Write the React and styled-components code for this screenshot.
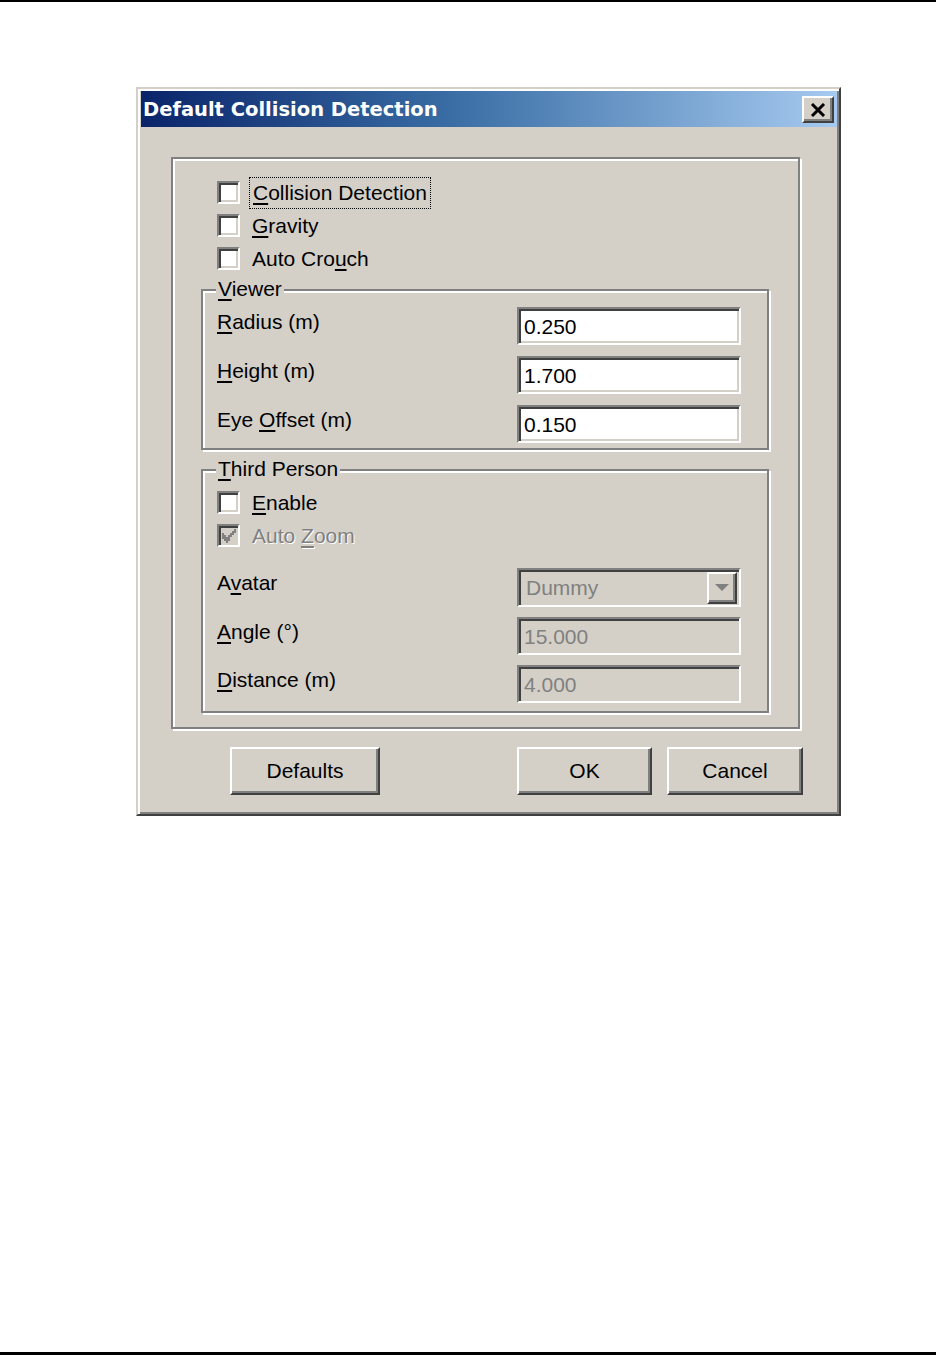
import React from "react";
import styled, { createGlobalStyle, css } from "styled-components";

const FACE = "#d4d0c8";
const SHADOW = "#808080";
const DARK = "#404040";
const LIGHT = "#ffffff";

const GlobalStyle = createGlobalStyle`
  html, body { margin: 0; padding: 0; background: #fff; }
  * { box-sizing: border-box; }
`;

const Page = styled.div`
  width: 936px;
  height: 1355px;
  border-top: 2px solid #000;
  border-bottom: 3px solid #000;
  padding: 85px 0 0 136px;
  background: #fff;
`;

const Dialog = styled.div`
  width: 705px;
  height: 729px;
  background: ${FACE};
  border: 2px solid;
  border-color: ${FACE} ${DARK} ${DARK} ${FACE};
  box-shadow: inset 2px 2px ${LIGHT}, inset -2px -2px ${SHADOW};
  padding: 2px 2px 0 3px;
  display: flex;
  flex-direction: column;
  font-family: "Liberation Sans", Arial, sans-serif;
  font-size: 21px;
  color: #000;
`;

const TitleBar = styled.div`
  height: 36px;
  display: flex;
  align-items: center;
  justify-content: space-between;
  padding: 1px 3px 0 2px;
  background: linear-gradient(to right, #0a246a 0%, #3a6ea5 45%, #a6caf0 100%);
`;

const Title = styled.span`
  font-family: "DejaVu Sans", Verdana, sans-serif;
  font-weight: bold;
  font-size: 19.5px;
  color: #fff;
  line-height: 1;
`;

const raised = css`
  background: ${FACE};
  border: 2px solid;
  border-color: ${LIGHT} ${DARK} ${DARK} ${LIGHT};
  box-shadow: inset -2px -2px ${SHADOW}, inset 2px 2px ${FACE};
`;

const sunken = css`
  border: 2px solid;
  border-color: ${SHADOW} ${LIGHT} ${LIGHT} ${SHADOW};
  box-shadow: inset 2px 2px ${DARK}, inset -2px -2px ${FACE};
`;

const CloseButton = styled.div`
  ${raised};
  width: 32px;
  height: 27px;
  display: flex;
  align-items: center;
  justify-content: center;
`;

const Content = styled.div`
  padding: 30px 0 0 30px;
  display: flex;
  flex-direction: column;
`;

const OuterGroup = styled.div`
  width: 629px;
  border: 2px solid ${SHADOW};
  box-shadow: inset 2px 2px ${LIGHT}, 2px 2px ${LIGHT};
  padding: 17px 29px 14px 28px;
  display: flex;
  flex-direction: column;
`;

const CheckRow = styled.div`
  height: 33px;
  display: flex;
  align-items: center;
  gap: 12px;
  margin-left: ${(p) => p.$indent || 0}px;
`;

const Box = styled.div`
  ${sunken};
  width: 23px;
  height: 23px;
  background: ${(p) => (p.$disabled ? FACE : "#fff")};
  display: flex;
  align-items: center;
  justify-content: center;
  flex: none;
`;

const Label = styled.span`
  line-height: 26px;
  white-space: nowrap;
  ${(p) =>
    p.$disabled &&
    css`
      color: ${SHADOW};
      text-shadow: 1px 1px ${LIGHT};
    `}
  ${(p) =>
    p.$focus &&
    css`
      outline: 1px dotted #000;
      outline-offset: 2px;
      padding: 0 1px;
    `}
`;

const Key = styled.span`
  text-decoration: underline;
  text-underline-offset: 3px;
  text-decoration-thickness: 2px;
`;

const Group = styled.div`
  position: relative;
  border: 2px solid ${SHADOW};
  box-shadow: inset 2px 2px ${LIGHT}, 2px 2px ${LIGHT};
  margin-top: ${(p) => p.$top}px;
  padding: ${(p) => p.$padTop}px 26px ${(p) => p.$padBottom}px 14px;
  display: flex;
  flex-direction: column;
`;

const Legend = styled.span`
  position: absolute;
  left: 13px;
  top: -15px;
  padding: 0 2px;
  background: ${FACE};
  line-height: 26px;
  white-space: nowrap;
`;

const FieldGrid = styled.div`
  display: grid;
  grid-template-columns: 300px 224px;
  row-gap: ${(p) => p.$gap}px;
  margin-top: ${(p) => p.$top || 0}px;
`;

const FieldLabel = styled.span`
  line-height: 26px;
  margin-top: 2px;
  white-space: nowrap;
`;

const Input = styled.div`
  ${sunken};
  height: ${(p) => p.$h || 38}px;
  background: ${(p) => (p.$disabled ? FACE : "#fff")};
  color: ${(p) => (p.$disabled ? SHADOW : "#000")};
  display: flex;
  align-items: center;
  padding-left: 5px;
  padding-right: 2px;
  line-height: 1;
`;

const SelectText = styled.span`
  flex: 1;
  padding-left: 2px;
`;

const DropButton = styled.div`
  ${raised};
  width: 30px;
  height: 32px;
  display: flex;
  align-items: center;
  justify-content: center;
`;

const ButtonRow = styled.div`
  display: flex;
  gap: 15px;
  margin-top: 18px;
  padding: 0 34px 0 59px;
`;

const Button = styled.div`
  ${raised};
  width: ${(p) => p.$w}px;
  height: 48px;
  display: flex;
  align-items: center;
  justify-content: center;
  margin-right: ${(p) => (p.$push ? "auto" : "0")};
`;

const CheckMark = ({ color }) => (
  <svg width="15" height="14" viewBox="0 0 7 7" shapeRendering="crispEdges">
    <path
      d="M0 2h1v1H0zM0 3h2v1H0zM0 4h3v1H0zM1 5h3v1H1zM2 6h1v1H2zM3 3h1v2H3zM4 2h1v2H4zM5 1h1v2H5zM6 0h1v2H6z"
      fill={color}
    />
  </svg>
);

const CloseIcon = () => (
  <svg width="16" height="14" viewBox="0 0 16 14">
    <path d="M2 1 L14 13 M14 1 L2 13" stroke="#000" strokeWidth="3" />
  </svg>
);

const Arrow = () => (
  <svg width="14" height="8" viewBox="0 0 14 8">
    <path d="M0 0 H14 L7 7 Z" fill={SHADOW} />
  </svg>
);

export default function App() {
  return (
    <>
      <GlobalStyle />
      <Page>
        <Dialog>
          <TitleBar>
            <Title>Default Collision Detection</Title>
            <CloseButton>
              <CloseIcon />
            </CloseButton>
          </TitleBar>
          <Content>
            <OuterGroup>
              <CheckRow $indent={16}>
                <Box />
                <Label $focus>
                  <Key>C</Key>ollision Detection
                </Label>
              </CheckRow>
              <CheckRow $indent={16}>
                <Box />
                <Label>
                  <Key>G</Key>ravity
                </Label>
              </CheckRow>
              <CheckRow $indent={16}>
                <Box />
                <Label>
                  Auto Cro<Key>u</Key>ch
                </Label>
              </CheckRow>

              <Group $top={14} $padTop={16} $padBottom={5}>
                <Legend>
                  <Key>V</Key>iewer
                </Legend>
                <FieldGrid $gap={11}>
                  <FieldLabel>
                    <Key>R</Key>adius (m)
                  </FieldLabel>
                  <Input>0.250</Input>
                  <FieldLabel>
                    <Key>H</Key>eight (m)
                  </FieldLabel>
                  <Input>1.700</Input>
                  <FieldLabel>
                    Eye <Key>O</Key>ffset (m)
                  </FieldLabel>
                  <Input>0.150</Input>
                </FieldGrid>
              </Group>

              <Group $top={19} $padTop={15} $padBottom={8}>
                <Legend>
                  <Key>T</Key>hird Person
                </Legend>
                <CheckRow>
                  <Box />
                  <Label>
                    <Key>E</Key>nable
                  </Label>
                </CheckRow>
                <CheckRow>
                  <Box $disabled>
                    <CheckMark color={SHADOW} />
                  </Box>
                  <Label $disabled>
                    Auto <Key>Z</Key>oom
                  </Label>
                </CheckRow>
                <FieldGrid $gap={10} $top={16}>
                  <FieldLabel>
                    A<Key>v</Key>atar
                  </FieldLabel>
                  <Input $disabled $h={39}>
                    <SelectText>Dummy</SelectText>
                    <DropButton>
                      <Arrow />
                    </DropButton>
                  </Input>
                  <FieldLabel>
                    <Key>A</Key>ngle (°)
                  </FieldLabel>
                  <Input $disabled>15.000</Input>
                  <FieldLabel>
                    <Key>D</Key>istance (m)
                  </FieldLabel>
                  <Input $disabled>4.000</Input>
                </FieldGrid>
              </Group>
            </OuterGroup>
            <ButtonRow>
              <Button $w={150} $push>
                Defaults
              </Button>
              <Button $w={135}>OK</Button>
              <Button $w={136}>Cancel</Button>
            </ButtonRow>
          </Content>
        </Dialog>
      </Page>
    </>
  );
}
